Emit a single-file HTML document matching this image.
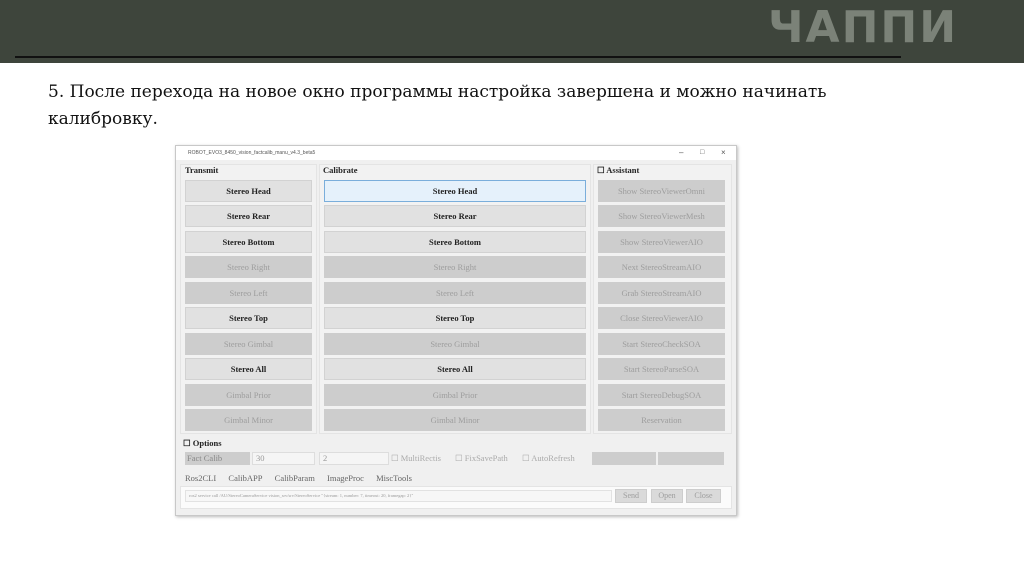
<!DOCTYPE html>
<html><head><meta charset="utf-8"><style>
*{margin:0;padding:0;box-sizing:border-box}
body{width:1024px;height:574px;background:#fff;position:relative;overflow:hidden;font-family:"Liberation Serif",serif}
.hdr{position:absolute;left:0;top:0;width:1024px;height:63px;background:#3e453c}
.hl{position:absolute;left:15px;top:56px;width:886px;height:2px;background:#111}
.logo{position:absolute;left:768px;top:2px;font-family:"DejaVu Sans",sans-serif;font-weight:bold;font-size:44px;color:#7b8278;letter-spacing:2px}
.txt{position:absolute;left:48px;top:79px;font-family:"DejaVu Serif",serif;font-size:17px;line-height:27px;color:#111;white-space:nowrap}
.win{position:absolute;left:175px;top:145px;width:562px;height:371px;background:#f0f0f0;border:1px solid #c8c8c8;box-shadow:1px 1px 3px #bbb}
.tb{position:absolute;left:0;top:0;width:560px;height:14px;background:#fff;font-family:"Liberation Sans",sans-serif;font-size:5px;color:#555;line-height:14px;padding-left:12px}
.a{position:absolute;font-size:8.5px;color:#222;white-space:nowrap}
.b{position:absolute;height:22px;background:#e1e1e1;border:1px solid #d2d2d2;font-size:8.5px;font-weight:bold;color:#222;text-align:center;line-height:20px}
.d{background:#cdcdcd;color:#9d9d9d;font-weight:normal;border-color:#cdcdcd}
.g{position:absolute;border:1px solid #e4e4e4;background:#f2f2f2}
</style></head><body>
<div class="hdr"></div><div class="hl"></div>
<div class="logo">ЧАППИ</div>
<div class="txt">5. После перехода на новое окно программы настройка завершена и можно начинать<br>калибровку.</div>
<div class="win">
<div class="tb">ROBOT_EVO3_8450_vision_factcalib_manu_v4.3_beta5<span style="position:absolute;left:503px;font-size:8px">–</span><span style="position:absolute;left:524px;font-size:7px">□</span><span style="position:absolute;left:545px;font-size:8px">×</span></div>
<div class="g" style="left:4px;top:18px;width:137px;height:270px"></div>
<div class="g" style="left:143px;top:18px;width:272px;height:270px"></div>
<div class="g" style="left:417px;top:18px;width:139px;height:270px"></div>
<div class="a" style="left:9px;top:19px;font-weight:bold">Transmit</div>
<div class="a" style="left:147px;top:19px;font-weight:bold">Calibrate</div>
<div class="a" style="left:421px;top:19px;font-weight:bold">☐ Assistant</div>
<div class="b" style="left:9px;top:34px;width:127px">Stereo Head</div>
<div class="b" style="left:9px;top:59px;width:127px">Stereo Rear</div>
<div class="b" style="left:9px;top:85px;width:127px">Stereo Bottom</div>
<div class="b d" style="left:9px;top:110px;width:127px">Stereo Right</div>
<div class="b d" style="left:9px;top:136px;width:127px">Stereo Left</div>
<div class="b" style="left:9px;top:161px;width:127px">Stereo Top</div>
<div class="b d" style="left:9px;top:187px;width:127px">Stereo Gimbal</div>
<div class="b" style="left:9px;top:212px;width:127px">Stereo All</div>
<div class="b d" style="left:9px;top:238px;width:127px">Gimbal Prior</div>
<div class="b d" style="left:9px;top:263px;width:127px">Gimbal Minor</div>
<div class="b" style="left:148px;top:34px;width:262px;background:#e5f1fb;border-color:#7aaedb">Stereo Head</div>
<div class="b" style="left:148px;top:59px;width:262px">Stereo Rear</div>
<div class="b" style="left:148px;top:85px;width:262px">Stereo Bottom</div>
<div class="b d" style="left:148px;top:110px;width:262px">Stereo Right</div>
<div class="b d" style="left:148px;top:136px;width:262px">Stereo Left</div>
<div class="b" style="left:148px;top:161px;width:262px">Stereo Top</div>
<div class="b d" style="left:148px;top:187px;width:262px">Stereo Gimbal</div>
<div class="b" style="left:148px;top:212px;width:262px">Stereo All</div>
<div class="b d" style="left:148px;top:238px;width:262px">Gimbal Prior</div>
<div class="b d" style="left:148px;top:263px;width:262px">Gimbal Minor</div>
<div class="b d" style="left:422px;top:34px;width:127px">Show StereoViewerOmni</div>
<div class="b d" style="left:422px;top:59px;width:127px">Show StereoViewerMesh</div>
<div class="b d" style="left:422px;top:85px;width:127px">Show StereoViewerAIO</div>
<div class="b d" style="left:422px;top:110px;width:127px">Next StereoStreamAIO</div>
<div class="b d" style="left:422px;top:136px;width:127px">Grab StereoStreamAIO</div>
<div class="b d" style="left:422px;top:161px;width:127px">Close StereoViewerAIO</div>
<div class="b d" style="left:422px;top:187px;width:127px">Start StereoCheckSOA</div>
<div class="b d" style="left:422px;top:212px;width:127px">Start StereoParseSOA</div>
<div class="b d" style="left:422px;top:238px;width:127px">Start StereoDebugSOA</div>
<div class="b d" style="left:422px;top:263px;width:127px">Reservation</div>
<div class="a" style="left:7px;top:292px;font-weight:bold">☐ Options</div>
<div class="a" style="left:9px;top:306px;width:65px;height:13px;background:#cdcdcd;color:#888;padding-left:2px;line-height:13px">Fact Calib</div>
<div class="a" style="left:76px;top:306px;width:63px;height:13px;background:#f5f5f5;border:1px solid #ddd;color:#999;padding-left:3px;line-height:11px">30</div>
<div class="a" style="left:143px;top:306px;width:70px;height:13px;background:#f5f5f5;border:1px solid #ddd;color:#999;padding-left:3px;line-height:11px">2</div>
<div class="a" style="left:215px;top:307px;color:#aaa">☐ MultiRectis</div>
<div class="a" style="left:279px;top:307px;color:#aaa">☐ FixSavePath</div>
<div class="a" style="left:346px;top:307px;color:#aaa">☐ AutoRefresh</div>
<div class="a" style="left:416px;top:306px;width:64px;height:13px;background:#cdcdcd"></div>
<div class="a" style="left:482px;top:306px;width:66px;height:13px;background:#cdcdcd"></div>
<div class="a" style="left:9px;top:327px;color:#666;word-spacing:4px">Ros2CLI&nbsp; CalibAPP&nbsp; CalibParam&nbsp; ImageProc&nbsp; MiscTools</div>
<div class="g" style="left:4px;top:340px;width:552px;height:23px;background:#fbfbfb"></div>
<div class="a" style="left:9px;top:344px;width:427px;height:12px;border:1px solid #e2e2e2;background:#f7f7f7;font-size:4.5px;color:#999;line-height:10px;padding-left:3px">ros2 service call /AU/StereoCameraService vision_srv/srv/StereoService "{stream: 1, number: 7, timeout: 20, framegap: 2}"</div>
<div class="b d" style="left:439px;top:343px;width:32px;height:14px;line-height:12px;font-size:8px;background:#dadada">Send</div>
<div class="b d" style="left:475px;top:343px;width:32px;height:14px;line-height:12px;font-size:8px;background:#dadada">Open</div>
<div class="b d" style="left:510px;top:343px;width:35px;height:14px;line-height:12px;font-size:8px;background:#dadada">Close</div>
</div>
</body></html>
